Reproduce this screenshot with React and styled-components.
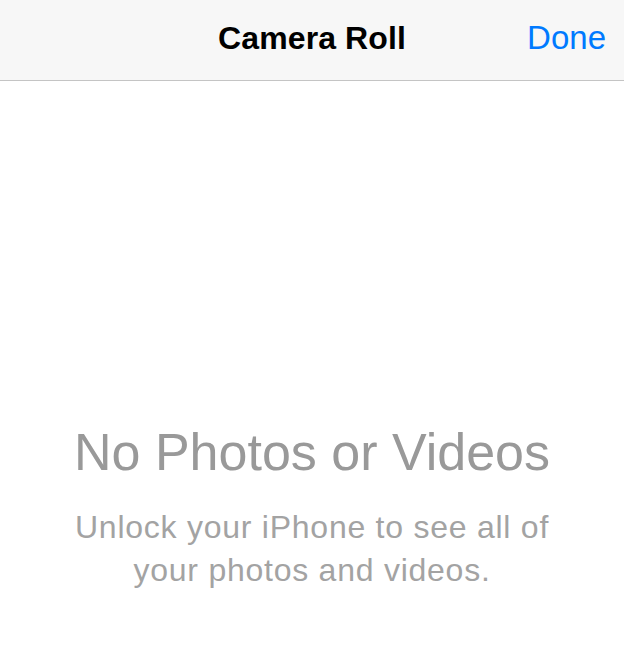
import React from 'react';
import styled, { createGlobalStyle } from 'styled-components';

const GlobalStyle = createGlobalStyle`
    html, body {
        margin: 0;
        padding: 0;
        background: #ffffff;
        font-family: "Liberation Sans", Arial, sans-serif;
    }
`;

const Screen = styled.div`
    width: 624px;
    min-height: 671px;
    display: flex;
    flex-direction: column;
    background: #ffffff;
`;

const NavBar = styled.header`
    position: relative;
    height: 81px;
    display: flex;
    align-items: center;
    justify-content: center;
    padding-bottom: 4px;
    box-sizing: border-box;
    background: #f7f7f7;
    border-bottom: 1px solid #c4c4c4;
`;

const NavTitle = styled.h1`
    margin: 0;
    font-size: 32px;
    font-weight: 700;
    letter-spacing: 0.1px;
    color: #000000;
`;

const NavButton = styled.button`
    position: absolute;
    right: 18px;
    top: 0;
    bottom: 4px;
    padding: 0;
    border: none;
    background: none;
    font-family: inherit;
    font-size: 33px;
    color: #007aff;
    cursor: pointer;
`;

const EmptyState = styled.main`
    display: flex;
    flex-direction: column;
    align-items: center;
    padding-top: 341px;
    text-align: center;
`;

const EmptyTitle = styled.h2`
    margin: 0;
    font-size: 52px;
    line-height: 60px;
    font-weight: 400;
    color: #999999;
`;

const EmptyText = styled.p`
    margin: 24px 0 0;
    width: 500px;
    font-size: 32px;
    line-height: 43px;
    letter-spacing: 0.75px;
    color: #a3a3a3;
`;

const App = () => {
    return (
        <Screen>
            <GlobalStyle />
            <NavBar>
                <NavTitle>Camera Roll</NavTitle>
                <NavButton>Done</NavButton>
            </NavBar>
            <EmptyState>
                <EmptyTitle>No Photos or Videos</EmptyTitle>
                <EmptyText>
                    Unlock your iPhone to see all of your photos and videos.
                </EmptyText>
            </EmptyState>
        </Screen>
    );
};

export default App;
